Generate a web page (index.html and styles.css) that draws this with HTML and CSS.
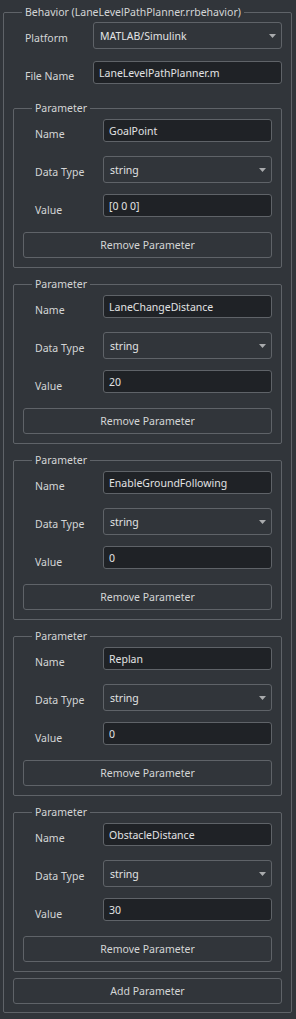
FILE: index.html
```html
<!DOCTYPE html>
<html lang="en">
<head>
    <meta charset="UTF-8">
    <title>Behavior Properties</title>
    <link rel="stylesheet" href="styles.css">
</head>
<body>
    <fieldset class="behavior">
        <legend>Behavior (LaneLevelPathPlanner.rrbehavior)</legend>

        <div class="form-row combo-row first">
            <label>Platform</label>
            <div class="combo">
                <span>MATLAB/Simulink</span>
                <svg class="arrow" width="7" height="4" viewBox="0 0 7 4"><path d="M0 0h7L3.5 4z"/></svg>
            </div>
        </div>
        <div class="form-row input-row file-row">
            <label>File Name</label>
            <input type="text" value="LaneLevelPathPlanner.m">
        </div>

        <fieldset class="param">
            <legend>Parameter</legend>
            <div class="form-row input-row">
                <label>Name</label>
                <input type="text" value="GoalPoint">
            </div>
            <div class="form-row combo-row">
                <label>Data Type</label>
                <div class="combo">
                    <span>string</span>
                    <svg class="arrow" width="7" height="4" viewBox="0 0 7 4"><path d="M0 0h7L3.5 4z"/></svg>
                </div>
            </div>
            <div class="form-row input-row value-row">
                <label>Value</label>
                <input type="text" value="[0 0 0]">
            </div>
            <button class="remove-btn">Remove Parameter</button>
        </fieldset>

        <fieldset class="param">
            <legend>Parameter</legend>
            <div class="form-row input-row">
                <label>Name</label>
                <input type="text" value="LaneChangeDistance">
            </div>
            <div class="form-row combo-row">
                <label>Data Type</label>
                <div class="combo">
                    <span>string</span>
                    <svg class="arrow" width="7" height="4" viewBox="0 0 7 4"><path d="M0 0h7L3.5 4z"/></svg>
                </div>
            </div>
            <div class="form-row input-row value-row">
                <label>Value</label>
                <input type="text" value="20">
            </div>
            <button class="remove-btn">Remove Parameter</button>
        </fieldset>

        <fieldset class="param">
            <legend>Parameter</legend>
            <div class="form-row input-row">
                <label>Name</label>
                <input type="text" value="EnableGroundFollowing">
            </div>
            <div class="form-row combo-row">
                <label>Data Type</label>
                <div class="combo">
                    <span>string</span>
                    <svg class="arrow" width="7" height="4" viewBox="0 0 7 4"><path d="M0 0h7L3.5 4z"/></svg>
                </div>
            </div>
            <div class="form-row input-row value-row">
                <label>Value</label>
                <input type="text" value="0">
            </div>
            <button class="remove-btn">Remove Parameter</button>
        </fieldset>

        <fieldset class="param">
            <legend>Parameter</legend>
            <div class="form-row input-row">
                <label>Name</label>
                <input type="text" value="Replan">
            </div>
            <div class="form-row combo-row">
                <label>Data Type</label>
                <div class="combo">
                    <span>string</span>
                    <svg class="arrow" width="7" height="4" viewBox="0 0 7 4"><path d="M0 0h7L3.5 4z"/></svg>
                </div>
            </div>
            <div class="form-row input-row value-row">
                <label>Value</label>
                <input type="text" value="0">
            </div>
            <button class="remove-btn">Remove Parameter</button>
        </fieldset>

        <fieldset class="param">
            <legend>Parameter</legend>
            <div class="form-row input-row">
                <label>Name</label>
                <input type="text" value="ObstacleDistance">
            </div>
            <div class="form-row combo-row">
                <label>Data Type</label>
                <div class="combo">
                    <span>string</span>
                    <svg class="arrow" width="7" height="4" viewBox="0 0 7 4"><path d="M0 0h7L3.5 4z"/></svg>
                </div>
            </div>
            <div class="form-row input-row value-row">
                <label>Value</label>
                <input type="text" value="30">
            </div>
            <button class="remove-btn">Remove Parameter</button>
        </fieldset>

        <button class="add-btn">Add Parameter</button>
    </fieldset>
</body>
</html>
```

FILE: styles.css
```css
body {
    margin: 0;
    background-color: #31353a;
    font-family: "Noto Sans", "DejaVu Sans", sans-serif;
    font-size: 10.5px;
    color: #d4d5d6;
}
fieldset {
    margin: 0;
    border: 1px solid #5f6368;
    border-radius: 2px;
    min-width: 0;
}
legend {
    margin-left: 9px;
    padding: 0 3px;
    height: 16px;
    line-height: 16px;
    color: #d4d5d6;
}
.behavior {
    margin: 4px 4px 0 3px;
    padding: 2px 9px 8px 9px;
}
.param {
    margin-top: 8px;
    padding: 3px 9px 9px 9px;
}
.behavior > .param:first-of-type {
    margin-top: 16px;
}
.form-row {
    display: grid;
    grid-template-columns: 80px 1fr;
    align-items: start;
}
.form-row label {
    padding-left: 12px;
    line-height: 16px;
}
.input-row label {
    margin-top: 7px;
}
.combo-row label {
    margin-top: 8px;
}
.combo-row {
    margin-top: 14px;
}
.combo-row.first {
    margin-top: 0;
}
.file-row {
    margin-top: 12px;
}
.value-row {
    margin-top: 11px;
}
.value-row label {
    margin-top: 8px;
}
input {
    box-sizing: border-box;
    width: 100%;
    height: 23px;
    margin: 0;
    padding: 0 5px;
    border: 1px solid #5f6368;
    border-radius: 3px;
    background-color: #1f2226;
    color: #e2e3e4;
    font-family: inherit;
    font-size: 10.5px;
    outline: none;
}
.combo {
    box-sizing: border-box;
    height: 27px;
    display: flex;
    align-items: center;
    justify-content: space-between;
    padding: 0 5px 0 6px;
    border: 1px solid #5f6368;
    border-radius: 3px;
    color: #e2e3e4;
}
.arrow {
    fill: #a9abad;
}
button {
    display: block;
    box-sizing: border-box;
    width: 100%;
    height: 26px;
    margin: 0;
    border: 1px solid #5f6368;
    border-radius: 3px;
    background-color: #31353a;
    color: #d4d5d6;
    font-family: inherit;
    font-size: 10.5px;
    line-height: 16px;
    cursor: pointer;
}
.remove-btn {
    margin-top: 14px;
}
.add-btn {
    margin-top: 6px;
}
```
